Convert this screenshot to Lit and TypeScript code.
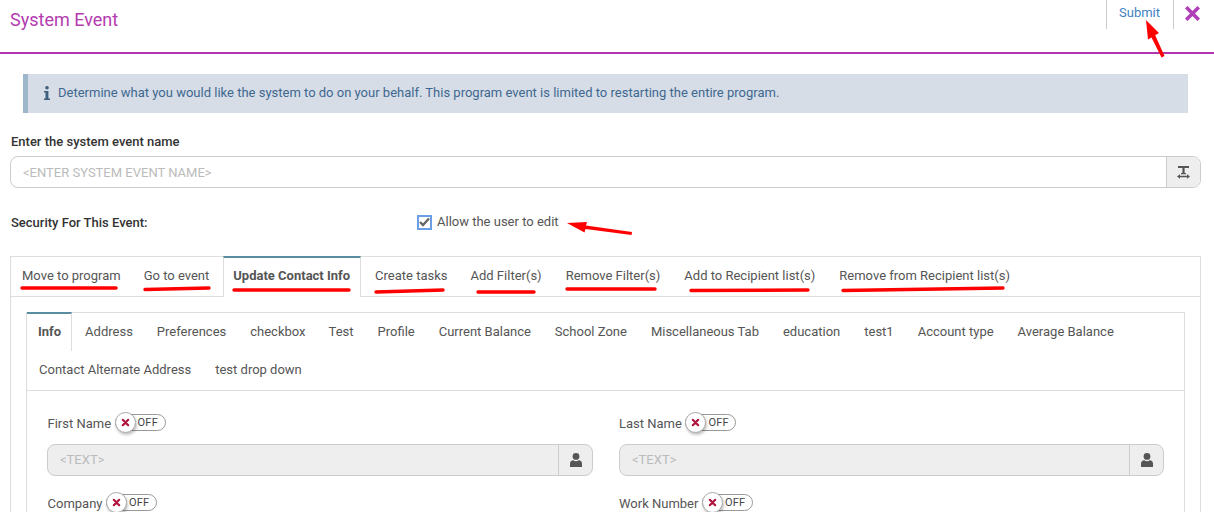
import { LitElement, html, css, svg } from "lit";
import { customElement } from "lit/decorators.js";

const outer = ["Move to program", "Go to event", "Update Contact Info", "Create tasks", "Add Filter(s)", "Remove Filter(s)", "Add to Recipient list(s)", "Remove from Recipient list(s)"];
const innerA = ["Info", "Address", "Preferences", "checkbox", "Test", "Profile", "Current Balance", "School Zone", "Miscellaneous Tab", "education", "test1", "Account type", "Average Balance"];
const innerB = ["Contact Alternate Address", "test drop down"];

const marks: [number, number, number, number][] = [
  [22, 288, 116, 288], [145, 289.5, 209, 288], [234, 290, 349, 290], [376, 292, 443, 290],
  [478, 292, 534, 292], [567, 289, 655, 289], [691, 290.5, 808, 290], [843, 290.5, 1003, 288],
];

const userIcon = html`<svg class="user" viewBox="0 0 12 14"><circle cx="6" cy="3.4" r="3.4" fill="#555"/><path fill="#555" d="M0 14V10.6C0 8.6 1.4 7.3 3.2 7.3C4 7.9 5 8.2 6 8.2C7 8.2 8 7.9 8.8 7.3C10.6 7.3 12 8.6 12 10.6V14Z"/></svg>`;

function toggle() {
  return html`<span class="toggle"><span class="knob"><svg viewBox="0 0 10 10" width="9" height="9"><path d="M2 2L8 8M8 2L2 8" stroke="#b0123b" stroke-width="2.4" stroke-linecap="round"/></svg></span><span class="off">OFF</span></span>`;
}

function field(name: string) {
  return html`<div class="field">
    <div class="field-label">${name}${toggle()}</div>
    <div class="ro"><span class="ro-text">&lt;TEXT&gt;</span><span class="ro-addon">${userIcon}</span></div>
  </div>`;
}

@customElement("app-root")
export class AppRoot extends LitElement {
  static styles = css`
    :host { display: block; position: relative; width: 1214px; height: 512px; overflow: hidden; background: #fff; font-family: Roboto, "Liberation Sans", sans-serif; font-size: 13px; color: #555; }
    * { box-sizing: border-box; }
    .head { height: 54px; border-bottom: 2px solid #b236ae; display: flex; align-items: flex-start; padding-left: 10px; }
    .title { font-size: 18px; line-height: 21px; color: #b43bb0; margin-top: 9px; flex: 1; }
    .submit { width: 68px; height: 29px; border-left: 1px solid #ccc; border-right: 1px solid #ccc; color: #3f83c4; text-align: center; line-height: 25px; margin-right: 40px; padding-right: 1px; }
    .close { position: absolute; left: 1185px; top: 6px; width: 15px; height: 15px; }
    .alert { margin: 20px 26px 0 23px; height: 39px; background: #d6dde6; border-left: 5px solid #9db6ca; display: flex; align-items: center; padding: 0 0 2px 16px; color: #3f6891; line-height: 15px; }
    .alert svg { width: 6px; height: 14px; margin-right: 8px; }
    .body { padding: 0 13px 0 10px; }
    .label { font-weight: 500; color: #333; line-height: 16px; padding-left: 1px; }
    .name-label { margin-top: 21px; }
    .input { margin-top: 6px; height: 32px; border: 1px solid #ccc; border-radius: 8px; display: flex; overflow: hidden; }
    .input span.ph { flex: 1; padding-left: 12px; line-height: 32px; color: #bbb; }
    .input .addon { width: 34px; border-left: 1px solid #ccc; background: #eee; display: flex; align-items: center; justify-content: center; }
    .security { display: flex; align-items: center; margin-top: 26px; height: 16px; }
    .security .label { width: 407px; margin-top: 1px; }
    .check { width: 15px; height: 15px; border: 2px solid #6a9fe8; display: flex; align-items: center; justify-content: center; margin-right: 5px; }
    .allow { color: #555; margin-top: -1px; }
    .outer { margin-top: 26px; border: 1px solid #ddd; height: 400px; }
    .tabs { display: flex; flex-wrap: wrap; gap: 0 2px; }
    .outer-tabs { height: 40px; border-bottom: 1px solid #ddd; }
    .tab { padding: 0 11px; line-height: 38px; height: 38px; white-space: nowrap; color: #555; }
    .outer-tabs .tab { height: 39px; line-height: 38px; }
    .outer-tabs .tab:first-child { padding-right: 10px; }
    .outer-tabs .tab:nth-child(4) { padding-right: 10px; }
    .outer-tabs .tab.on { height: 41px; margin: -1px 1px 0 1px; padding: 0 10px 0 9px; line-height: 36px; background: #fff; border: 1px solid #ddd; border-top: 2px solid #5a8d9f; border-bottom: 0; font-weight: 700; }
    .inner { margin: 15px 15px 0 15px; border: 1px solid #ddd; border-bottom: 0; height: 300px; }
    .inner-tabs { border-bottom: 1px solid #ddd; height: 78px; align-content: flex-start; }
    .inner-tabs .tab { height: 38px; line-height: 37px; }
    .inner-tabs > .tab:nth-child(4) { padding-right: 10px; }
    .inner-tabs .row2 { display: flex; gap: 2px; width: 100%; padding-left: 1px; height: 39px; }
    .inner-tabs .tab.on { border-top: 2px solid #5a8d9f; border-right: 1px solid #ddd; padding: 0 10px 0 11px; line-height: 35px; font-weight: 700; margin-top: -1px; height: 39px; }
    .grid { display: grid; grid-template-columns: 546px 545px; column-gap: 26px; padding: 22px 0 0 20px; row-gap: 17px; }
    .field-label { display: flex; align-items: center; height: 21px; gap: 3.5px; color: #555; }
    .field:nth-child(odd) .field-label { padding-left: 0.5px; }
    .ro { margin-top: 10px; height: 32px; border: 1px solid #ccc; border-radius: 8px; background: #eee; display: flex; }
    .ro-text { flex: 1; padding-left: 12px; line-height: 30px; color: #bbb; }
    .ro-addon { width: 34px; border-left: 1px solid #ccc; display: flex; align-items: center; justify-content: center; }
    .user { width: 12px; height: 14px; }
    .toggle { position: relative; display: inline-block; width: 51px; height: 17px; border: 1px solid #999; border-radius: 9px; margin-top: -2px; }
    .knob { position: absolute; left: -1px; top: -3px; width: 21px; height: 21px; border-radius: 50%; background: #fff; border: 1px solid #aaa; box-shadow: 1px 2px 3px rgba(0,0,0,.25); display: flex; align-items: center; justify-content: center; }
    .off { position: absolute; left: 22px; top: 0; font-size: 11px; letter-spacing: 0.2px; line-height: 15px; color: #444; }
    .marks { position: absolute; left: 0; top: 0; pointer-events: none; }
  `;

  render() {
    return html`
      <div class="head">
        <div class="title">System Event</div>
        <div class="submit">Submit</div>
        <svg class="close" viewBox="0 0 15 15"><path d="M1.2 1.2L13.8 13.8M13.8 1.2L1.2 13.8" stroke="#b040b8" stroke-width="3.6"/></svg>
      </div>
      <div class="alert">
        <svg viewBox="0 0 6 14"><circle cx="3" cy="1.8" r="1.8" fill="#3f5f80"/><path fill="#3f5f80" d="M0 5H4.4V12.4H6V14H0V12.4H1.5V6.6H0Z"/></svg>
        <span>Determine what you would like the system to do on your behalf. This program event is limited to restarting the entire program.</span>
      </div>
      <div class="body">
        <div class="label name-label">Enter the system event name</div>
        <div class="input">
          <span class="ph">&lt;ENTER SYSTEM EVENT NAME&gt;</span>
          <span class="addon"><svg width="13" height="13" viewBox="0 0 13 13"><path d="M1 1H12" stroke="#555" stroke-width="2"/><path d="M6.5 1V8" stroke="#555" stroke-width="2.2"/><path d="M4 7.6H9" stroke="#555" stroke-width="1.4"/><path d="M2 10.5H11" stroke="#555" stroke-width="1.3"/><path d="M0 10.5L3 8.3V12.7ZM13 10.5L10 8.3V12.7Z" fill="#555"/></svg></span>
        </div>
        <div class="security">
          <div class="label">Security For This Event:</div>
          <span class="check"><svg width="11" height="10" viewBox="0 0 11 10"><path d="M1 5L4 8L10 1.5" stroke="#666" stroke-width="2.4" fill="none"/></svg></span>
          <span class="allow">Allow the user to edit</span>
        </div>
        <div class="outer">
          <div class="tabs outer-tabs">
            ${outer.map((t, i) => html`<div class="tab ${i === 2 ? "on" : ""}">${t}</div>`)}
          </div>
          <div class="inner">
            <div class="tabs inner-tabs">
              ${innerA.map((t, i) => html`<div class="tab ${i === 0 ? "on" : ""}">${t}</div>`)}
              <div class="row2">${innerB.map((t) => html`<div class="tab">${t}</div>`)}</div>
            </div>
            <div class="grid">
              ${field("First Name")}${field("Last Name")}${field("Company")}${field("Work Number")}
            </div>
          </div>
        </div>
      </div>
      <svg class="marks" width="1214" height="512">
        ${marks.map(([a, b, c, d]) => svg`<line x1=${a} y1=${b} x2=${c} y2=${d} stroke="#f00" stroke-width="3.4" stroke-linecap="round"/>`)}
        <path d="M1146 20L1159 33L1155.2 35.2L1164.5 56L1161.5 57.5L1151.5 37.5L1148 39.5Z" fill="#f00"/>
        <path d="M567 223L587 222L586 225.5L632 232L631.5 235L585.5 229L584.5 232.5Z" fill="#f00"/>
      </svg>
    `;
  }
}
